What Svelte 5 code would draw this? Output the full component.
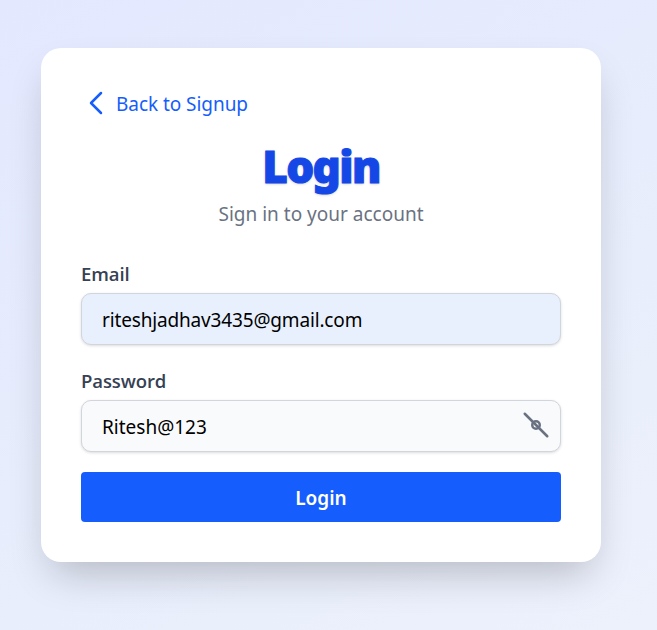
<script>
  let email = $state('riteshjadhav3435@gmail.com');
  let password = $state('Ritesh@123');
  let visible = $state(true);
</script>

<main>
  <section class="card">
    <button class="back" type="button">
      <svg width="30" height="30" viewBox="0 0 24 24" fill="none" stroke="currentColor" stroke-width="2" stroke-linecap="round" stroke-linejoin="round"><path d="m16 20-8-8 8-8" /></svg>
      <span>Back to Signup</span>
    </button>
    <h1>Login</h1>
    <p>Sign in to your account</p>
    <form onsubmit={(e) => e.preventDefault()}>
      <label for="email">Email</label>
      <input id="email" class="filled" type="text" bind:value={email} />
      <label for="password" class="second">Password</label>
      <div class="field">
        <input id="password" type={visible ? 'text' : 'password'} value={password} oninput={(e) => (password = e.currentTarget.value)} />
        <button class="eye" type="button" aria-label="Toggle password" onclick={() => (visible = !visible)}>
          <svg width="30" height="30" viewBox="0 0 24 24" fill="none" stroke="currentColor" stroke-width="2" stroke-linecap="round"><path d="m3 3 18 18" /><circle cx="12" cy="12" r="3" /></svg>
        </button>
      </div>
      <button class="submit" type="submit">Login</button>
    </form>
  </section>
</main>

<style>
  :global(body) { margin: 0; overflow: hidden; }
  main {
    box-sizing: border-box;
    height: 630px;
    padding: 48px 56px 68px 41px;
    background: linear-gradient(150deg, #e3e8ff, #e7edfc 50%, #edf1fc);
    font-family: "Noto Sans", "Open Sans", sans-serif;
    font-size: 19px;
  }
  .card {
    box-sizing: border-box;
    height: 514px;
    padding: 40px;
    border-radius: 20px;
    background: #fff;
    box-shadow: 0 20px 40px -10px rgba(0, 0, 0, 0.23);
  }
  button { font: inherit; border: 0; padding: 0; background: none; }
  svg { display: block; }
  .back {
    display: flex;
    align-items: center;
    height: 30px;
    gap: 5px;
    color: #155dfc;
    letter-spacing: -0.05px;
  }
  .back span { padding-top: 2px; }
  h1 {
    margin: 23px 0 0;
    height: 50px;
    line-height: 51px;
    text-align: center;
    font-size: 44px;
    font-weight: 900;
    letter-spacing: -1.6px;
    color: #1447e6;
    -webkit-text-stroke: 1px #1447e6;
    text-shadow: 0 1px 3px rgba(0, 0, 0, 0.2);
  }
  p {
    margin: 8px 0 0;
    height: 30px;
    line-height: 30px;
    text-align: center;
    color: #6a7282;
    letter-spacing: 0;
  }
  label {
    display: block;
    height: 30px;
    line-height: 30px;
    margin-top: 30px;
    font-family: "Open Sans", sans-serif;
    font-weight: 600;
    font-size: 18.5px;
    letter-spacing: -0.1px;
    color: #364153;
  }
  .second { margin-top: 21px; }
  input {
    display: block;
    box-sizing: border-box;
    width: 100%;
    height: 52px;
    margin: 4px 0 0;
    padding: 3px 20px 1px;
    border: 1px solid #d1d5dc;
    border-radius: 10px;
    background: #f9fafb;
    box-shadow: 0 1px 3px rgba(0, 0, 0, 0.14);
    color: #000;
    font: inherit;
    letter-spacing: -0.16px;
    outline: none;
  }
  #password { letter-spacing: 0; }
  .filled { background: #e8f0fe; }
  .field { position: relative; }
  .eye { position: absolute; right: 10px; top: 10px; color: #6a7282; }
  .submit {
    display: block;
    width: 100%;
    height: 50px;
    margin-top: 20px;
    padding-top: 1px;
    border-radius: 4px;
    background: #155dfc;
    color: #fff;
    font-weight: 600;
  }
</style>
